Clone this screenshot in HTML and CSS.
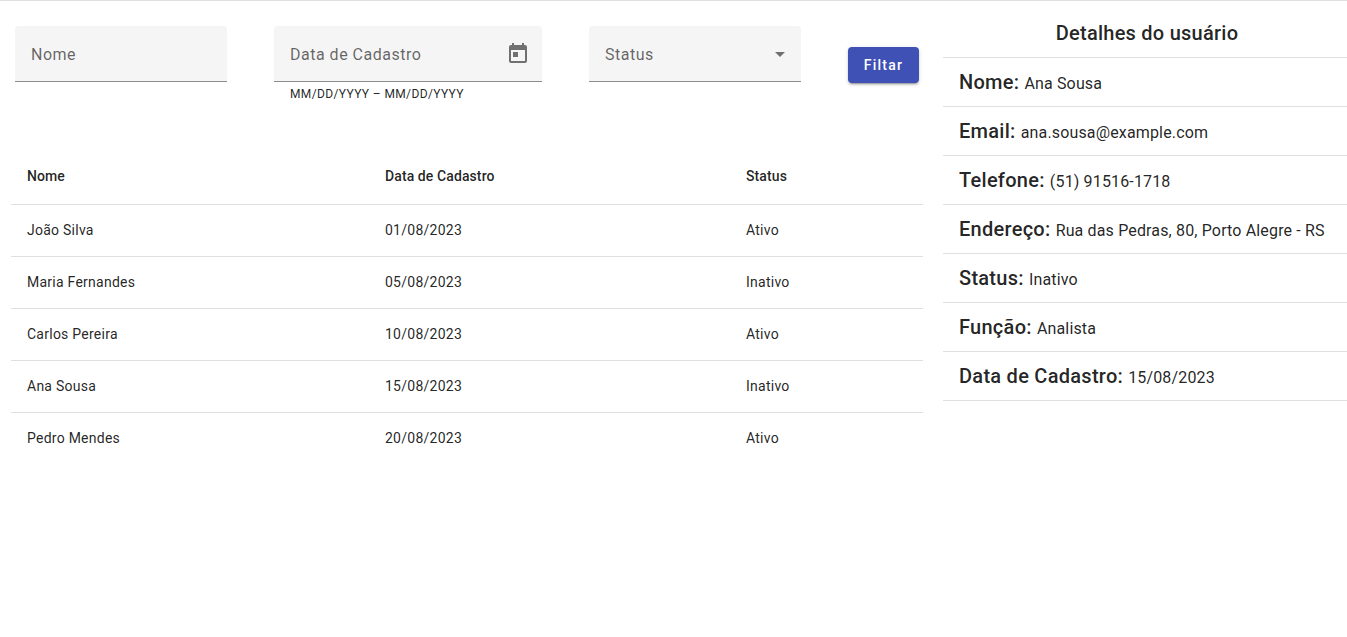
FILE: index.html
```html
<!DOCTYPE html>
<html lang="pt-BR">
<head>
<meta charset="utf-8">
<title>Usuários</title>
<link rel="stylesheet" href="styles.css">
</head>
<body>
<div class="page">
  <main class="main">
    <form class="filters">
      <div class="field w212"><span class="label">Nome</span></div>
      <div class="date-wrap">
        <div class="field w268">
          <span class="label">Data de Cadastro</span>
          <svg class="cal" viewBox="0 0 24 24" width="24" height="24"><path d="M19 3h-1V1h-2v2H8V1H6v2H5c-1.11 0-1.99.9-1.99 2L3 19c0 1.1.89 2 2 2h14c1.1 0 2-.9 2-2V5c0-1.1-.9-2-2-2zm0 16H5V8h14v11zM7 10h5v5H7z"/></svg>
        </div>
        <div class="hint">MM/DD/YYYY – MM/DD/YYYY</div>
      </div>
      <div class="field w212"><span class="label">Status</span><span class="arrow"></span></div>
      <button type="button" class="btn">Filtar</button>
    </form>
    <table class="table">
      <thead>
        <tr><th class="c1">Nome</th><th class="c2">Data de Cadastro</th><th>Status</th></tr>
      </thead>
      <tbody>
        <tr><td>João Silva</td><td>01/08/2023</td><td>Ativo</td></tr>
        <tr><td>Maria Fernandes</td><td>05/08/2023</td><td>Inativo</td></tr>
        <tr><td>Carlos Pereira</td><td>10/08/2023</td><td>Ativo</td></tr>
        <tr><td>Ana Sousa</td><td>15/08/2023</td><td>Inativo</td></tr>
        <tr><td>Pedro Mendes</td><td>20/08/2023</td><td>Ativo</td></tr>
      </tbody>
    </table>
  </main>
  <aside class="details">
    <h2 class="title">Detalhes do usuário</h2>
    <ul class="list">
      <li><strong>Nome:</strong> Ana Sousa</li>
      <li><strong>Email:</strong> ana.sousa@example.com</li>
      <li><strong>Telefone:</strong> (51) 91516-1718</li>
      <li><strong>Endereço:</strong> Rua das Pedras, 80, Porto Alegre - RS</li>
      <li><strong>Status:</strong> Inativo</li>
      <li><strong>Função:</strong> Analista</li>
      <li><strong>Data de Cadastro:</strong> 15/08/2023</li>
    </ul>
  </aside>
</div>
</body>
</html>
```
FILE: styles.css
```css
* { box-sizing: border-box; }
html, body { margin: 0; height: 100%; }
body {
  font-family: Roboto, "Liberation Sans", sans-serif;
  color: rgba(0, 0, 0, .87);
  background: #fff;
  overflow: hidden;
}
.page {
  display: flex;
  gap: 20px;
  padding-left: 11px;
  border-top: 1px solid #e0e0e0;
}
.main { width: 912px; flex: none; }
.filters {
  display: flex;
  align-items: flex-start;
  gap: 47px;
  padding: 25px 0 0 4px;
  height: 147px;
}
.field {
  height: 56px;
  background: #f5f5f5;
  border-bottom: 1px solid #8c8c8c;
  border-radius: 4px 4px 0 0;
  padding: 2px 16px 0;
  display: flex;
  align-items: center;
  justify-content: space-between;
}
.w212 { width: 212px; }
.w268 { width: 268px; }
.label {
  font-size: 16px;
  letter-spacing: .5px;
  color: rgba(0, 0, 0, .6);
}
.cal { fill: rgba(0, 0, 0, .54); margin: -2px -4px 0 0; }
.arrow {
  width: 0;
  height: 0;
  border-left: 5px solid transparent;
  border-right: 5px solid transparent;
  border-top: 5px solid rgba(0, 0, 0, .54);
}
.hint {
  font-size: 12px;
  letter-spacing: .37px;
  line-height: 14px;
  padding: 5px 16px 0;
  color: rgba(0, 0, 0, .87);
}
.btn {
  margin-top: 21px;
  width: 71px;
  height: 36px;
  border: 0;
  border-radius: 4px;
  background: #3f51b5;
  color: #fff;
  font: 500 14px/36px Roboto, sans-serif;
  letter-spacing: 1.25px;
  padding: 0;
  box-shadow: 0 3px 1px -2px rgba(0,0,0,.2), 0 2px 2px 0 rgba(0,0,0,.14), 0 1px 5px 0 rgba(0,0,0,.12);
}
.table {
  width: 100%;
  border-collapse: collapse;
  table-layout: fixed;
  font-size: 14px;
}
.c1 { width: 358px; }
.c2 { width: 361px; }
th, td {
  text-align: left;
  padding: 0 16px;
  letter-spacing: .25px;
}
th {
  height: 56px;
  font-weight: 500;
  border-bottom: 1px solid #e0e0e0;
  letter-spacing: .1px;
}
td {
  height: 52px;
  border-bottom: 1px solid #e0e0e0;
}
tbody tr:last-child td { border-bottom: 0; }
.details { width: 404px; flex: none; }
.title {
  margin: 0;
  height: 57px;
  padding: 16px 0 0 4px;
  font-size: 20px;
  font-weight: 500;
  line-height: 32px;
  letter-spacing: .25px;
  text-align: center;
  border-bottom: 1px solid #e0e0e0;
}
.list { list-style: none; margin: 0; padding: 0; }
.list li {
  height: 49px;
  padding: 0 16px;
  display: block;
  line-height: 48px;
  font-size: 16px;
  border-bottom: 1px solid #e0e0e0;
  letter-spacing: .15px;
  white-space: nowrap;
}
.list strong { font-size: 20px; font-weight: 500; letter-spacing: .27px; margin-right: 1px; }
```
